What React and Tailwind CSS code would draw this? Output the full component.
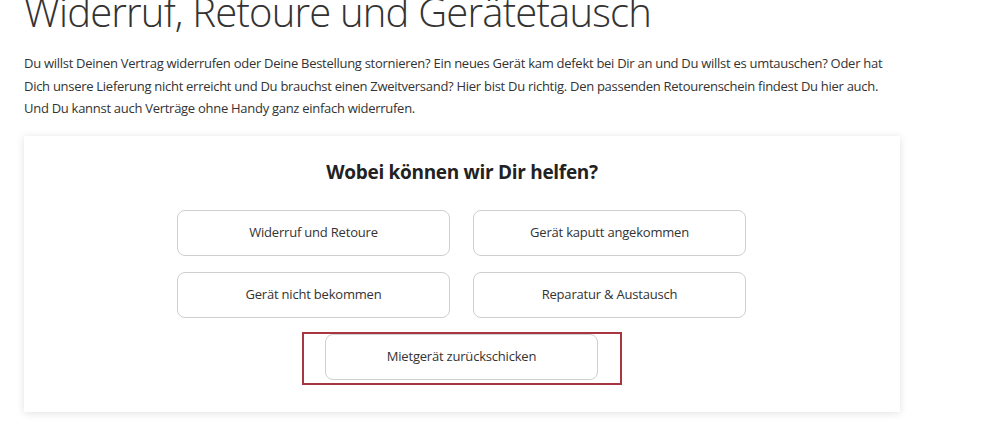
import React from "react";

const options = [
  "Widerruf und Retoure",
  "Gerät kaputt angekommen",
  "Gerät nicht bekommen",
  "Reparatur & Austausch",
];

function OptionButton({ label }) {
  return (
    <button className="w-[273px] h-[46px] rounded-[8px] border border-[#cfcfcf] bg-white text-[13px] text-[#333] tracking-[-0.2px] flex items-center justify-center">
      {label}
    </button>
  );
}

export default function App() {
  return (
    <div className="min-h-screen bg-white font-['Open_Sans',sans-serif] text-[#333] overflow-hidden">
      <div className="pl-[24px] w-[900px]">
        {/* page title */}
        <h1 className="mt-[-16px] text-[40px] font-light leading-[56px] text-[#333] tracking-[-0.8px]">
          Widerruf, Retoure und Gerätetausch
        </h1>

        {/* intro */}
        <p className="mt-[12px] text-[13px] leading-[22.5px] text-[#333] tracking-[-0.28px]">
          <span className="block whitespace-nowrap">
            Du willst Deinen Vertrag widerrufen oder Deine Bestellung stornieren? Ein neues Gerät kam defekt bei Dir an und Du willst es umtauschen? Oder hat
          </span>
          <span className="block whitespace-nowrap">
            Dich unsere Lieferung nicht erreicht und Du brauchst einen Zweitversand? Hier bist Du richtig. Den passenden Retourenschein findest Du hier auch.
          </span>
          <span className="block whitespace-nowrap">
            Und Du kannst auch Verträge ohne Handy ganz einfach widerrufen.
          </span>
        </p>

        {/* help card */}
        <div className="mt-[16px] w-[876px] bg-white shadow-[0_1px_8px_rgba(0,0,0,0.12)] pt-[22px] pb-[27px] flex flex-col items-center">
          <h2 className="text-[19px] font-bold text-[#222] leading-[28px] tracking-[-0.3px]">
            Wobei können wir Dir helfen?
          </h2>
          <div className="mt-[24px] grid grid-cols-2 gap-x-[23px] gap-y-[16px] ml-[-1px]">
            {options.map((o) => (
              <OptionButton key={o} label={o} />
            ))}
          </div>
          <div className="mt-[14px] border-2 border-[#a8353f] pl-[21px] pr-[22px] pt-0 pb-[3px]">
            <OptionButton label="Mietgerät zurückschicken" />
          </div>
        </div>
      </div>
    </div>
  );
}
